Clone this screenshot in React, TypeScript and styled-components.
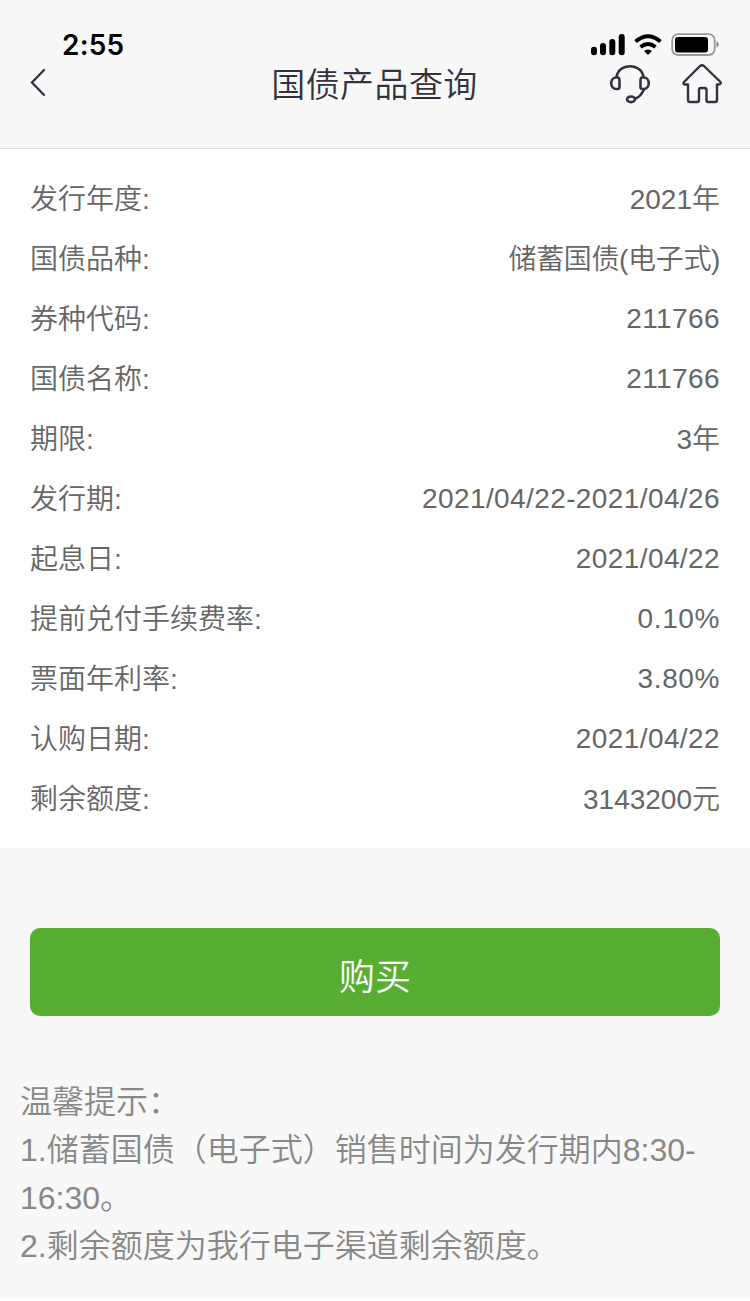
import React from 'react';
import styled, { createGlobalStyle } from 'styled-components';

const Global = createGlobalStyle`
  * { box-sizing: border-box; }
  body { margin: 0; background: #fff; font-family: "Liberation Sans", "Noto Sans CJK SC", sans-serif; }
`;
const Page = styled.main`width: 750px; height: 1299px; overflow: hidden; background: #f8f8f8; display: flex; flex-direction: column;`;
const Header = styled.header`height: 149px; flex: none; border-bottom: 1px solid #dcdcdc; padding-top: 30px;`;
const StatusBar = styled.div`height: 30px; display: flex; justify-content: space-between; align-items: center; padding: 0 30px 0 62px;`;
const Clock = styled.span`font: 600 28px/30px Inter, sans-serif; letter-spacing: 0.2px; color: #000;`;
const StatusIcons = styled.svg`width: 130px; height: 24px; display: block;`;
const NavBar = styled.div`height: 48px; display: grid; grid-template-columns: 200px 1fr 200px; align-items: center;`;
const Title = styled.h1`margin: 0 0 0 -1px; font-size: 34px; font-weight: 350; line-height: 50px; text-align: center; color: #333340; letter-spacing: 0.4px; white-space: nowrap;`;
const BackIcon = styled.svg`width: 17px; height: 29px; margin: 0 0 6px 29px; display: block;`;
const Actions = styled.div`display: flex; justify-content: flex-end; gap: 30px; padding-right: 27px;`;
const ActionIcon = styled.svg`width: 42px; height: 42px; display: block;`;
const Details = styled.dl`margin: 0; height: 699px; flex: none; background: #fff; padding: 20px 30px 0;`;
const Row = styled.div`height: 60px; display: flex; justify-content: space-between; align-items: center; font-size: 28px; font-weight: 350; color: #666; line-height: 60px;`;
const Label = styled.dt`margin: 0; padding-top: 2px;`;
const Value = styled.dd<{ $spacing?: number; $text?: boolean }>`margin: 0; padding-top: ${p => p.$text ? 2 : 0}px; letter-spacing: ${p => p.$spacing ?? 0}px;`;
const BuyButton = styled.button`margin: 80px 30px 0; height: 88px; flex: none; border: 0; border-radius: 10px; background: #58ae32; color: #fff; font: 350 36px/80px "Liberation Sans", "Noto Sans CJK SC", sans-serif; padding: 10px 0 0;`;
const Tips = styled.section`margin: 62px 20px 0; color: #888; font-size: 32px; font-weight: 350; line-height: 48px;`;
const Tip = styled.p`margin: 0; white-space: pre-line;`;

type Detail = { label: string; value: string; spacing?: number; text?: boolean };
const rows: Detail[] = [
  { label: '发行年度:', value: '2021年', text: true },
  { label: '国债品种:', value: '储蓄国债(电子式)', spacing: -0.35, text: true },
  { label: '券种代码:', value: '211766', spacing: 0.4 },
  { label: '国债名称:', value: '211766', spacing: 0.4 },
  { label: '期限:', value: '3年', text: true },
  { label: '发行期:', value: '2021/04/22-2021/04/26', spacing: 0.4 },
  { label: '起息日:', value: '2021/04/22', spacing: 0.4 },
  { label: '提前兑付手续费率:', value: '0.10%', spacing: 0.6 },
  { label: '票面年利率:', value: '3.80%', spacing: 0.6 },
  { label: '认购日期:', value: '2021/04/22', spacing: 0.4 },
  { label: '剩余额度:', value: '3143200元', text: true },
];

export default function App() {
  return <><Global /><Page>
    <Header>
      <StatusBar><Clock>2:55</Clock>
        <StatusIcons viewBox="590 33 130 24">
          <path d="M594 49.700v2.600M603 46v6.300M612.300 42v10.300M621.700 37v15.300" stroke="#000" strokeWidth="6" strokeLinecap="round" />
          <path d="M635.500 41.500q12.500-10.500 25 0M640.500 47q7.500-6 15 0" fill="none" stroke="#000" strokeWidth="3.800" />
          <path d="M644 51q4-3 8 0l-4 4z" />
          <rect x="672.200" y="34.200" width="42.500" height="20.800" rx="6" fill="none" stroke="#999" strokeWidth="1.800" />
          <rect x="675" y="37" width="33" height="15.500" rx="3" /><path d="M716.500 41q4.500 3.500 0 7z" fill="#888" />
        </StatusIcons>
      </StatusBar>
      <NavBar>
        <BackIcon viewBox="0 0 17 29"><path d="M15 2L3 14.500 15 27" fill="none" stroke="#333340" strokeWidth="2.300" strokeLinecap="round" /></BackIcon>
        <Title>国债产品查询</Title>
        <Actions>
          <ActionIcon viewBox="610 64 42 42" fill="none" stroke="#333340" strokeWidth="2.600" strokeLinecap="round" strokeLinejoin="round">
            <path d="M617.500 77.500C619 62.500 643 62.500 644.500 77.500M617.500 77.500H619Q620.500 78 620.500 80V87Q620.500 89 618.500 89H617.500C610.500 89 610.500 77.500 617.500 77.500zM644.500 77.500H643Q641.500 78 641.500 80V87Q641.500 89 643.500 89H644.500C651.500 89 651.500 77.500 644.500 77.500zM645 89.500Q641.500 97 636.500 98.500" />
            <ellipse cx="632" cy="99.300" rx="4" ry="2.800" />
          </ActionIcon>
          <ActionIcon viewBox="681 64 42 42" fill="none" stroke="#333340" strokeWidth="2.400" strokeLinejoin="round">
            <path d="M684 82L700 66Q702 64.500 704 66L720.500 82Q721.500 84.500 718.500 84.500H717V100Q717 102 715 102H708.500Q706.500 102 706.500 100V90Q706.500 88 704.500 88H701Q699 88 699 90V100Q699 102 697 102H690Q688 102 688 100V84.500H685.500Q682.500 84.500 684 82z" />
          </ActionIcon>
        </Actions>
      </NavBar>
    </Header>
    <Details>{rows.map(({ label, value, spacing, text }) => <Row key={label}><Label>{label}</Label><Value $spacing={spacing} $text={text}>{value}</Value></Row>)}</Details>
    <BuyButton>购买</BuyButton>
    <Tips><Tip>温馨提示：</Tip><Tip>{'1.储蓄国债（电子式）销售时间为发行期内8:30-\n16:30。'}</Tip><Tip>2.剩余额度为我行电子渠道剩余额度。</Tip></Tips>
  </Page></>;
}
